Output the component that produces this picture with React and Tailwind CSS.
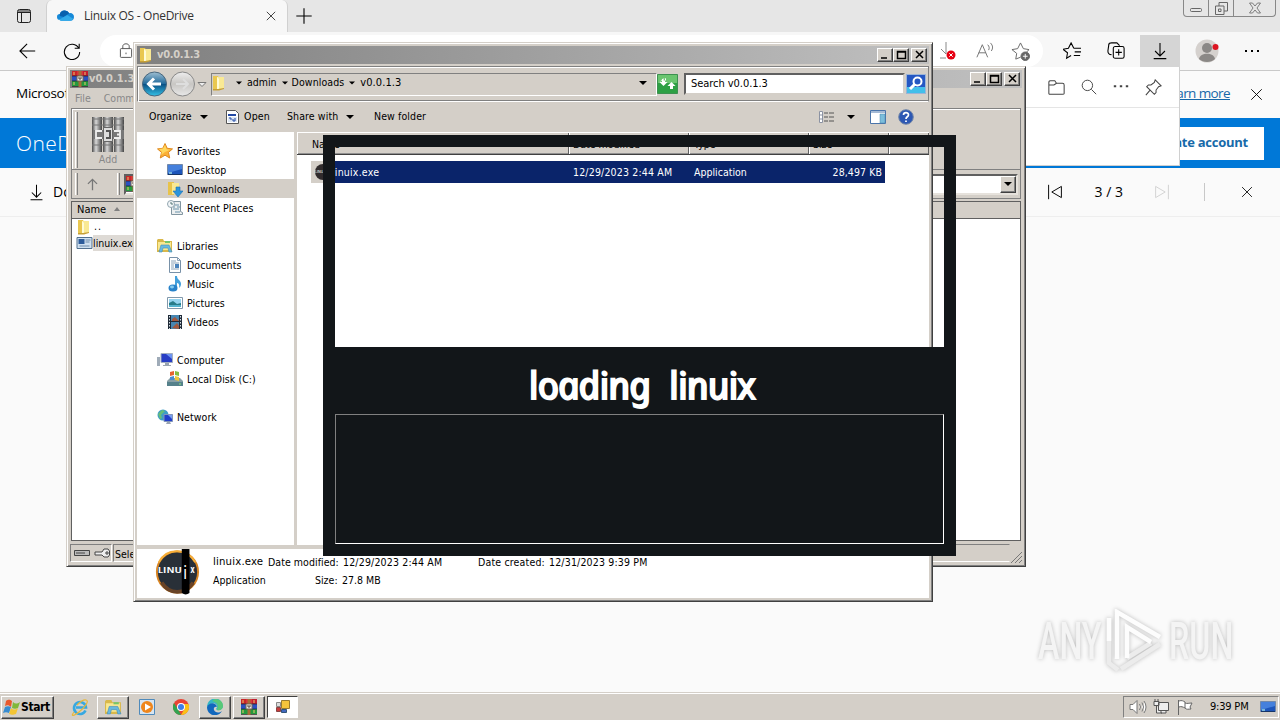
import React from "react";

const uiFont = "font-['DejaVu_Sans_Condensed','DejaVu_Sans',sans-serif] [font-stretch:75%]";

const Folder = ({ className = "w-4 h-4" }) => (
  <svg viewBox="0 0 16 16" className={className}>
    <path d="M2 1h5l1 2v12H2z" fill="#e9c750" />
    <path d="M6 2h7v11l-5 2H6z" fill="#f9e994" />
    <path d="M6 2v13l2-1V4z" fill="#fffbd6" />
    <path d="M2 14h5l6-1v1l-5 1.500H2z" fill="#c69f36" />
  </svg>
);

const Books = ({ className = "w-4 h-4" }) => (
  <svg viewBox="0 0 16 16" className={className}>
    <path d="M0 0h5v5H0z" fill="#c8262a" />
    <path d="M5 0h6v5H5z" fill="#da343a" />
    <path d="M11 0h5v5h-5z" fill="#c01f31" />
    <path d="M0 5h16v5H0z" fill="#2a50c0" />
    <path d="M0 10h16v5H0z" fill="#249a3e" />
    <path d="M0 5h16M0 10h16M0 15.500h16" stroke="#222" strokeWidth=".7" />
    <path d="M6.500 0h3v16h-3z" fill="#a76d36" />
    <path d="M5 5h6v5H5z" fill="#eee" stroke="#765" />
    <path d="M7 6v2h2V6" stroke="#543" fill="none" />
    <path d="M2 1v3M13 1v3M2 11v3M13 11v3" stroke="#edc66b" />
  </svg>
);

const Library = ({ className = "w-4 h-4" }) => (
  <svg viewBox="0 0 16 16" className={className}>
    <path d="M0 2l1-1h5l1 2h8v11H0z" fill="#d9b84a" />
    <path d="M1 4h13v8H1z" fill="#f9e891" />
    <path d="M8 3h5v2H8z" fill="#76c66b" />
    <path d="M2 14l2-7h8l3 7h-3l-1-4H6l-1 4z" fill="#68b8df" stroke="#428eb9" strokeWidth=".6" />
  </svg>
);

const Monitor = ({ className = "w-4 h-4" }) => (
  <svg viewBox="0 0 16 16" className={className}>
    <path d="M.5 2.500h15v10H.5z" fill="#1d55ba" stroke="#7288a8" />
    <path d="M1 3h14v4L1 11z" fill="#4580dc" />
    <path d="M1 12h14v1H1z" fill="#163567" />
    <path d="M2 10h3v2H2z" fill="#79b7da" />
  </svg>
);

const navIcons = {
  star: (
    <svg viewBox="0 0 16 16" className="w-4 h-4">
      <path d="M8 .5l2.200 4.800 5.300.6-4 3.500 1.200 5.600L8 12.200 3.300 15l1.200-5.600-4-3.500 5.300-.6z" fill="#fbb036" stroke="#e08a22" />
      <path d="M8 2l1.600 4.200 3.700.5L8 9l-4 3 1-3-3-3 4-.5z" fill="#ffd75c" />
    </svg>
  ),
  desktop: <Monitor />,
  downloads: (
    <svg viewBox="0 0 16 16" className="w-4 h-4">
      <path d="M1 1h6v13H1z" fill="#e8c34a" />
      <path d="M5 2h7v11H5z" fill="#fae993" />
      <path d="M9 6h4v4h3l-5 6-5-6h3z" fill="#2b94dc" stroke="#1b70b4" strokeWidth=".6" />
    </svg>
  ),
  recent: (
    <svg viewBox="0 0 16 16" className="w-4 h-4">
      <path d="M4.500 1.500h9v10l2 1v2h-11z" fill="#eceff0" stroke="#8195a0" />
      <path d="M6 5h6M6 7h2m2 0h3M6 9h6M8 12h5" stroke="#6b93aa" />
      <circle cx="4" cy="4" r="3.500" fill="#f2f6f8" stroke="#91a4ae" />
      <path d="M4 2v2h2" stroke="#577" fill="none" />
    </svg>
  ),
  library: <Library />,
  doc: (
    <svg viewBox="0 0 16 16" className="w-4 h-4">
      <path d="M2.500.5h8l3 3v12h-11z" fill="#fff" stroke="#7891a8" />
      <path d="M10.500.5v3h3M4 4h5M4 6h8M4 8h3M4 10h3M4 12h8" stroke="#8ca2b8" fill="none" />
      <path d="M8 7h4v4H8z" fill="#4c83bb" />
    </svg>
  ),
  music: (
    <svg viewBox="0 0 16 16" className="w-4 h-4">
      <path d="M8 0h2c0 4 4 4 4 8 0 2-1 3-2 4 1-4-1-5-2-5v5H8z" fill="#43a0dc" />
      <ellipse cx="6" cy="12" rx="4.500" ry="3.500" fill="#2782ca" />
      <ellipse cx="5" cy="11" rx="2" ry="1.400" fill="#83cbf0" />
    </svg>
  ),
  pictures: (
    <svg viewBox="0 0 16 16" className="w-4 h-4">
      <path d="M.5 2.500h15v11H.5z" fill="#fff" stroke="#8198ab" />
      <path d="M2 4h12v8H2z" fill="#95d4ef" />
      <path d="M2 8l4-2 4 3 4-1v4H2z" fill="#287b88" />
      <path d="M2 10h12v2H2z" fill="#55b3ce" />
    </svg>
  ),
  videos: (
    <svg viewBox="0 0 16 16" className="w-4 h-4">
      <path d="M1 1h14v14H1z" fill="#202b38" />
      <path d="M4 1h8v6H4zM4 8h8v7H4z" fill="#4787b2" />
      <path d="M5 5l3-2 4 4H5zM5 14l5-5 2 3v3z" fill="#a2583e" />
      <path d="M2.500 2v13M13.500 2v13" stroke="#d8e2e8" strokeDasharray="1.500 1.500" />
    </svg>
  ),
  computer: (
    <svg viewBox="0 0 16 16" className="w-4 h-4">
      <path d="M0 5h3v9H0z" fill="#9fabb8" />
      <path d="M4 1.500h11.500v9H4z" fill="#273dc5" stroke="#a3aec0" />
      <path d="M9 2h6v5z" fill="#6d94f2" />
      <path d="M8 11h4v2h2v1H6v-1h2z" fill="#9aa5b1" />
    </svg>
  ),
  disk: (
    <svg viewBox="0 0 16 16" className="w-4 h-4">
      <path d="M1 9l2-2h10l3 3v5H0v-5z" fill="#879fa6" />
      <path d="M0 11h16v4H0z" fill="#55818b" />
      <path d="M3 1l4-1v4L3 5z" fill="#e66430" />
      <path d="M8 0l4 1v4L8 4z" fill="#83bd42" />
      <path d="M3 6l4-1v4L3 9z" fill="#4a8bd0" />
      <path d="M8 5l4 1v4L8 9z" fill="#edc73d" />
      <path d="M12 13h2" stroke="#8ee97f" />
    </svg>
  ),
  network: (
    <svg viewBox="0 0 16 16" className="w-4 h-4">
      <circle cx="6" cy="6" r="5.500" fill="#3c9dc6" />
      <path d="M1 5l4-4 3 1-4 4 1 3-2 1z" fill="#67bd79" />
      <path d="M7 5.500h8.500v7H7z" fill="#203dcb" stroke="#8295b9" />
      <path d="M11 6h4v4z" fill="#779df0" />
      <path d="M10 13h3l1 2H9z" fill="#9aa5b1" />
    </svg>
  ),
};

const navItems = [
  { icon: "star", label: "Favorites" },
  { icon: "desktop", label: "Desktop", child: true },
  { icon: "downloads", label: "Downloads", child: true, active: true },
  { icon: "recent", label: "Recent Places", child: true },
  null,
  { icon: "library", label: "Libraries" },
  { icon: "doc", label: "Documents", child: true },
  { icon: "music", label: "Music", child: true },
  { icon: "pictures", label: "Pictures", child: true },
  { icon: "videos", label: "Videos", child: true },
  null,
  { icon: "computer", label: "Computer" },
  { icon: "disk", label: "Local Disk (C:)", child: true },
  null,
  { icon: "network", label: "Network" },
];

const raised =
  "border border-t-white border-l-white border-r-[#404040] border-b-[#404040] shadow-[inset_-1px_-1px_0_#808080]";
const windowFrame =
  "bg-[#d4cfc8] border border-t-[#d4cfc8] border-l-[#d4cfc8] border-r-[#404040] border-b-[#404040] shadow-[inset_1px_1px_0_#fff,inset_-1px_-1px_0_#808080]";

const WindowButtons = () => (
  <div className="flex">
    {["M3 9h6", "M3.500 2.500h8v7h-8zM3 3h9", "M4 2l7 7M11 2l-7 7"].map((d, i) => (
      <div key={d} className={`w-4 h-[14px] bg-[#d4cfc8] ${raised} ${i === 2 ? "ml-[2px]" : ""}`}>
        <svg viewBox="0 0 14 12" className="w-[14px] h-3">
          <path d={d} fill="none" stroke="#000" strokeWidth="1.500" />
        </svg>
      </div>
    ))}
  </div>
);

const Caret = ({ className = "" }) => (
  <span className={`block w-0 h-0 border-x-4 border-x-transparent border-t-4 border-t-black ${className}`} />
);

const Line = ({ children, className = "w-5 h-5", width = 1.2 }) => (
  <svg viewBox="0 0 20 20" className={className} fill="none" stroke="currentColor" strokeWidth={width}>
    {children}
  </svg>
);

const Cross = ({ className }) => (
  <Line className={className}>
    <path d="M3 3l14 14M17 3L3 17" />
  </Line>
);

const DownloadIcon = ({ className }) => (
  <Line className={className}>
    <path d="M10 1v14M4.500 10l5.500 5.500 5.500-5.500M3 18.500h14" />
  </Line>
);

const Browser = () => (
  <div className="w-full h-[692px] bg-[#fafafa] flex flex-col font-['Open_Sans',sans-serif] text-black">
    {/* Tab strip */}
    <div className="h-8 shrink-0 bg-[#e6e6e6] flex">
      <div className="w-[46px] pl-4 pt-[8px]">
        <svg viewBox="0 0 16 16" className="w-4 h-4" fill="none" stroke="#222">
          <rect x="1.500" y="1.500" width="13" height="13" rx="2" />
          <path d="M2 4.500h12M5.500 5v9M2 3h12" />
        </svg>
      </div>
      <div className="w-[242px] bg-[#f7f7f7] rounded-t-md border-x border-[#d0d0d0] flex items-center pl-[10px] pr-[10px]">
        <svg viewBox="0 0 18 12" className="w-[17px] h-3">
          <path d="M3 10a3 3 0 010-6 5.500 5.500 0 0110-1c3-.5 5 1.500 5 4 0 3-2 4-4 4H4z" fill="#1689d8" />
          <path d="M3 4a5.500 5.500 0 0110-1l-6 4-4-1z" fill="#0860ae" />
          <path d="M2 10l9-5 6 4c-.5 2-2 2-4 2H4z" fill="#32aaea" />
        </svg>
        <span className="ml-[10px] text-[12px] tracking-[-0.28px] text-[#333]">Linuix OS - OneDrive</span>
        <Cross className="w-[12px] h-[12px] ml-auto" />
      </div>
      <Line className="w-[22px] h-[22px] ml-[5px] mt-[5px]" width={1}><path d="M10 3v14M3 10h14" /></Line>
      <div className="ml-auto mr-[4px] w-[93px] h-[17px] border border-t-0 border-[#888] rounded-b flex text-[#666]">
        <div className="w-[25px] border-r border-[#888] flex justify-center items-center">
          <svg viewBox="0 0 12 12" className="w-3 h-3" fill="none" stroke="currentColor"><rect x=".5" y="6.500" width="11" height="3" rx="1" /></svg>
        </div>
        <div className="w-[25px] border-r border-[#888] flex justify-center items-center">
          <svg viewBox="0 0 13 13" className="w-[13px] h-[13px]" fill="none" stroke="currentColor"><path d="M4 4V.5h8.500V9H9M.5 4H9v8.500H.5zM3.500 7H6v2.500H3.500z" /></svg>
        </div>
        <div className="flex-1 flex justify-center items-center">
          <svg viewBox="0 0 12 12" className="w-3 h-3" fill="none" stroke="currentColor" strokeWidth=".8"><path d="M.5 1h3L6 4l2.500-3h3L8 6l3.500 5h-3L6 8l-2.500 3h-3L4 6z" /></svg>
        </div>
      </div>
    </div>
    {/* Navigation bar */}
    <div className="h-[39px] shrink-0 bg-[#f7f7f7] border-b border-[#c9c9c9] flex items-center">
      <Line className="w-[18px] h-[18px] ml-[19px]"><path d="M18 10H1M9 2l-8 8 8 8" /></Line>
      <Line className="w-[18px] h-[18px] ml-[26px]"><path d="M18 2v5h-5M17.500 7A8.500 8.500 0 1018.500 11" /></Line>
      <div className="w-[943px] h-8 ml-[19px] rounded-full bg-white flex items-center px-[18px] text-[#555]">
        <Line className="w-4 h-4"><rect x="3" y="7" width="14" height="11" rx="1" /><path d="M6 7V4c0-4 8-4 8 0v3M10 12v2" /></Line>
        <div className="ml-auto flex items-center">
          <svg viewBox="0 0 20 20" className="w-5 h-5 ml-[2px]">
            <path d="M9 1v12M4 8l5 5M3 17h6" stroke="#888" fill="none" />
            <circle cx="14" cy="14" r="4.500" fill="#e60012" /><path d="M12.300 12.300l3.400 3.400m0-3.400l-3.400 3.400" stroke="#fff" />
          </svg>
          <Line className="w-[18px] h-[18px] ml-[19px] text-[#777]" width={1.1}><path d="M1 17L7 3l6 14M3 12h8M13 3c2 2 2 4 1 6M16 1c3 3 3 6 1 9" /></Line>
          <svg viewBox="0 0 20 20" className="w-[19px] h-[19px] ml-[17px] -mr-[5px]" fill="none" stroke="#666">
            <path d="M10 16l-5 2 1-6-5-4 6-1 3-6 3 6 6 1-3 3" /><circle cx="15" cy="15" r="4.500" fill="#666" /><path d="M15 12.500v5M12.500 15h5" stroke="#fff" />
          </svg>
        </div>
      </div>
      <Line className="w-[18px] h-[18px] ml-[20px]"><path d="M12 7L9 1 6 7 0 8l5 4-1 6 5-3M12 7h8M13 11h7M12 15h7" /></Line>
      <Line className="w-[18px] h-[18px] ml-[26px]"><path d="M5 14c-3 0-4-2-4-4L2 3c0-2 1-2 3-2h6l3 3" /><rect x="7" y="5" width="12" height="13" rx="2" /><path d="M13 8v7M9.500 11.500h7" /></Line>
      <div className="w-10 h-8 ml-[15px] bg-[#d5d5d5] flex items-center justify-center"><DownloadIcon className="w-[18px] h-[18px]" /></div>
      <svg viewBox="0 0 24 24" className="w-6 h-6 ml-[15px]">
        <circle cx="12" cy="12" r="11.500" fill="#d5d1ce" /><circle cx="12" cy="9" r="5" fill="#8b8886" /><path d="M4 20c1-7 15-7 16 0-4 4-12 4-16 0z" fill="#8b8886" /><circle cx="20.500" cy="8" r="3" fill="#dc1420" />
      </svg>
      <div className="ml-[26px] flex gap-[4px]">
        <i className="w-[2px] h-[2px] bg-black" /><i className="w-[2px] h-[2px] bg-black" /><i className="w-[2px] h-[2px] bg-black" />
      </div>
    </div>
    {/* Notice strip */}
    <div className="h-[47px] shrink-0 flex items-center pl-4 pr-[16px] text-[13.5px]">
      <span className="tracking-[-0.25px] pb-[2px]">Microsoft</span>
      <span className="ml-auto mr-[19px] pb-[2px] tracking-[-0.6px] text-[#1767a8] underline">Learn more</span>
      <Cross className="w-[15px] h-[15px]" />
    </div>
    <div className="h-[50px] shrink-0 bg-[#0078d7] flex items-center pl-4 pr-4 text-white">
      <span className="text-[21px] font-light tracking-[0.4px] pt-[2px] w-[52px] whitespace-nowrap overflow-hidden">OneDrive</span>
      <div className="ml-auto bg-white h-[33px] flex items-center px-4 text-[#176aa9] text-[13px] font-bold tracking-[-0.25px]">Create account</div>
    </div>
    <div className="h-[49px] shrink-0 border-b border-[#eeeeee] flex items-center pl-[28px] pr-[26px] text-[14px]">
      <DownloadIcon className="w-[17px] h-[17px]" />
      <span className="ml-[8px] pb-px">Download</span>
      <Line className="w-4 h-4 ml-auto"><path d="M2 1v18M18 3v14L6 10z" /></Line>
      <span className="ml-[32px] pb-px text-[14px]">3 / 3</span>
      <Line className="w-4 h-4 ml-[31px] text-[#d2d2d2]"><path d="M18 1v18M2 3v14l12-7z" /></Line>
      <span className="h-[18px] w-px bg-[#c8c8c8] ml-[34px] mr-[35px]" />
      <Cross className="w-[14px] h-[14px]" />
    </div>
  </div>
);

const DownloadsFlyout = () => (
  <div className="absolute left-[1000px] top-[67px] w-[180px] h-[99px] bg-white border-r border-b border-[#d0d0d0] text-[#444]">
    <div className="h-[41px] border-b border-[#e5e5e5] flex items-center justify-end pr-[17px] gap-[16px]">
      <Line className="w-[17px] h-[17px]"><path d="M1 4c0-2 1-2 2-2h5l2 3h7c1 0 2 1 2 2v10c0 1-1 1-2 1H3c-1 0-2 0-2-1zM1 7h6l3-2" /></Line>
      <Line className="w-4 h-4"><circle cx="8" cy="8" r="6.500" /><path d="M13 13l6 6" /></Line>
      <Line className="w-4 h-4"><path d="M1 9h3M8.500 9h3M16 9h3" strokeWidth="2.400" /></Line>
      <Line className="w-[17px] h-[17px]"><path d="M12 1l7 7-3 1-3 4 0 3-2 2-9-9 2-2 3 0 4-3zM6 13l-5 6" /></Line>
    </div>
  </div>
);

const WinRar = () => (
  <div className={`absolute left-[66px] top-[66px] w-[960px] h-[501px] p-[3px] flex flex-col text-[10.5px] ${uiFont} ${windowFrame}`}>
    <div className="h-[18px] shrink-0 bg-linear-to-r from-[#808080] to-[#c0c0c0] flex items-center pl-[2px] pr-[2px]">
      <Books />
      <span className="ml-px mr-auto font-bold text-[#d4cfc8] text-[11px]">v0.0.1.3</span>
      <WindowButtons />
    </div>
    <div className="h-[20px] shrink-0 flex items-center pt-[2px] pl-[5px] gap-[13px] text-[#888]">
      <span>File</span><span>Commands</span>
    </div>
    <div className="h-[62px] shrink-0 border border-[#808080] shadow-[inset_1px_1px_0_#fff] mx-[1px] flex pl-[3px] pt-[3px]">
      <i className="w-[3px] h-[56px] border-l border-white border-r border-r-[#808080]" />
      <div className="ml-[11px] mt-[4px] w-[38px] text-center text-[#888]">
        <svg viewBox="0 0 34 36" className="w-[34px] h-9 ml-[2px]">
          <defs>
            <linearGradient id="spine" x1="0" x2="1"><stop offset="0" stopColor="#4a4a4a" /><stop offset=".4" stopColor="#d8d8d8" /><stop offset="1" stopColor="#444" /></linearGradient>
          </defs>
          <path d="M1 1h10v35H1z" fill="url(#spine)" />
          <path d="M12 1h10v35H12z" fill="url(#spine)" />
          <path d="M23 1h10v35H23z" fill="url(#spine)" />
          <path d="M1 3h32M1 9h32M1 29h32" stroke="#777" />
          <path d="M2 14h31v9H2z" fill="#777" />
          <path d="M11 15H5v7h6M23 15h6v7h-6M26 18.500h3" fill="none" stroke="#eee" strokeWidth="1.800" />
          <path d="M12.500 11.500h9v14h-9z" fill="#ddd" stroke="#666" />
          <path d="M15 15h4v7h-4" stroke="#555" fill="none" strokeWidth="2" />
        </svg>
        <div className="leading-[13px] mt-px">Add</div>
      </div>
    </div>
    <div className="h-[29px] shrink-0 border-x border-b border-[#808080] mx-[1px] flex items-center pl-[3px] pr-[2px]">
      <i className="w-[3px] h-[22px] border-l border-white border-r border-r-[#808080]" />
      <Line className="w-[13px] h-[13px] ml-[8px] text-[#777]" width={2}><path d="M10 19V2M3 9l7-7 7 7" /></Line>
      <i className="w-[3px] h-[22px] ml-[18px] border-l border-white border-r border-r-[#808080]" />
      <div className="ml-[4px] flex-1 h-[21px] bg-white border-2 border-t-[#606060] border-l-[#606060] border-r-[#e6e2dc] border-b-[#e6e2dc] flex items-center justify-between">
        <Books />
        <div className={`w-4 h-[17px] bg-[#d4cfc8] flex items-center justify-center ${raised}`}><Caret /></div>
      </div>
    </div>
    <div className="mt-[2px] flex-1 mx-[1px] border border-[#606060] bg-white overflow-hidden">
      <div className="h-[17px] bg-[#d4cfc8] border-b border-[#606060] flex items-center pl-[5px] pt-px text-[11px]">
        Name<span className="ml-[8px] -mt-[3px] w-0 h-0 border-x-[3.5px] border-x-transparent border-b-4 border-b-[#808080]" />
      </div>
      <div className="h-[16px] flex items-center pl-[4px]"><Folder /> <span className="ml-[2px] tracking-[1px]">..</span></div>
      <div className="h-[16px] flex items-center pl-[4px]">
        <svg viewBox="0 0 16 12" className="w-[17px] h-3"><path d="M.5.5h15v11H.5z" fill="#cfe0f0" stroke="#52708f" /><path d="M2 2h6v5H2z" fill="#2c5b9a" /><path d="M9 3h5M9 5h4M3 9h10" stroke="#6c89a8" /></svg>
        <span className="bg-[#dedad5] h-4 leading-4">linuix.exe</span>
      </div>
    </div>
    <div className="h-[20px] shrink-0 mt-[2px] flex items-center text-[10.5px]">
      <div className="w-[42px] h-[18px] border border-[#808080] border-r-white border-b-white flex items-center gap-[4px] pl-[3px]">
        <svg viewBox="0 0 16 8" className="w-4 h-2"><path d="M.5 1.500h15v5H.5z" fill="#bbb" stroke="#444" /><path d="M2 4h9" stroke="#444" /></svg>
        <svg viewBox="0 0 16 10" className="w-4 h-[10px]"><path d="M10 1h4l1.500 2v4L14 9h-4L8 7H1V4h7zM12 4h2v2h-2z" fill="#eee" stroke="#444" /></svg>
      </div>
      <div className="ml-px flex-1 h-[18px] border border-[#808080] border-r-transparent border-b-white pl-px leading-[18px]">Selected 1 file</div>
      <svg viewBox="0 0 12 12" className="w-3 h-3 self-end"><path d="M1 12L12 1M5 12l7-7M9 12l3-3" stroke="#777" /></svg>
    </div>
  </div>
);

const columns = [
  { label: "Name", cls: "w-[272px] pl-[15px]" },
  { label: "Date modified", cls: "w-[120px] pl-[4px]" },
  { label: "Type", cls: "w-[120px] pl-[5px]" },
  { label: "Size", cls: "w-[80px] pl-[4px]" },
  { label: "", cls: "flex-1" },
];

const Explorer = () => (
  <div className={`absolute left-[133px] top-[42px] w-[800px] h-[560px] p-[3px] flex flex-col text-[10.5px] ${uiFont} ${windowFrame}`}>
    {/* Title bar */}
    <div className="h-[18px] shrink-0 bg-linear-to-r from-[#808080] to-[#c0c0c0] flex items-center pl-px pr-[2px]">
      <Folder />
      <span className="ml-[3px] mr-auto pt-px font-bold text-[11px] text-[#d4cfc8] tracking-[-0.3px]">v0.0.1.3</span>
      <WindowButtons />
    </div>
    {/* Address bar */}
    <div className="mt-[2px] h-[36px] shrink-0 border border-[#808080] border-b-white shadow-[inset_1px_1px_0_#fff,inset_0_-1px_0_#808080] flex items-center pl-[3px] pr-px">
      <svg viewBox="0 0 66 28" className="w-[66px] h-7">
        <defs>
          <linearGradient id="back" x1="0" y1="0" x2="0" y2="1"><stop offset="0" stopColor="#9fbfd2" /><stop offset=".48" stopColor="#246c9d" /><stop offset=".5" stopColor="#084d82" /><stop offset="1" stopColor="#36c2e7" /></linearGradient>
          <linearGradient id="fwd" x1="0" y1="0" x2="0" y2="1"><stop offset="0" stopColor="#eee" /><stop offset=".5" stopColor="#c8c6c3" /><stop offset="1" stopColor="#e9e9e9" /></linearGradient>
        </defs>
        <circle cx="13.500" cy="14" r="12" fill="url(#back)" stroke="#48667d" />
        <path d="M20 14H8M13 8.500L7.500 14l5.500 5.500" fill="none" stroke="#fff" strokeWidth="3" />
        <circle cx="41.500" cy="14" r="12" fill="url(#fwd)" stroke="#888" />
        <path d="M35 14h12M42 9l5 5-5 5" fill="none" stroke="#dedede" strokeWidth="2" />
        <path d="M57 12.500h8l-4 4z" fill="#eee" stroke="#777" />
      </svg>
      <div className="ml-[4px] w-[446px] h-[23px] border border-[#808080] border-b-white border-r-white flex items-center pb-[2px]">
        <Folder className="w-4 h-4 -ml-px" />
        <Caret className="ml-[8px] scale-75" /><span className="ml-[4px]">admin</span>
        <Caret className="ml-[4px] scale-75" /><span className="ml-[3px] tracking-[0.08px]">Downloads</span>
        <Caret className="ml-[4px] scale-75" /><span className="ml-[4px] text-[11px] tracking-[0.1px]">v0.0.1.3</span>
        <Caret className="ml-auto mr-[9px]" />
      </div>
      <svg viewBox="0 0 21 20" className="w-[21px] h-5">
        <path d="M.5.5h20v19H.5z" fill="#2da044" stroke="#3d9150" /><path d="M1 1h19v8H1z" fill="#6ac56f" />
        <path d="M2.500 8L6.500 4v2.500H9V4M6.500 12l-4-4h2.500V5h3v3h2.500zM14.500 8l4 4H16v3h-3v-3h-2.500z" fill="#fff" />
      </svg>
      <div className="ml-[6px] w-[221px] h-[22px] bg-white border-2 border-t-[#606060] border-l-[#606060] border-r-[#d4cfc8] border-b-[#d4cfc8] pl-[5px] leading-[17px] text-[11px] tracking-[-0.05px]">Search v0.0.1.3</div>
      <svg viewBox="0 0 20 20" className="w-5 h-5 ml-px">
        <path d="M.5.5h19v19H.5z" fill="#2557c3" stroke="#9bb4d6" /><path d="M1 13h18v6H1z" fill="#42bfea" /><circle cx="11.500" cy="7.500" r="4" fill="none" stroke="#fff" strokeWidth="2" /><path d="M9 10l-5 5" stroke="#fff" strokeWidth="3" />
      </svg>
    </div>
    {/* Command bar */}
    <div className="h-[30px] shrink-0 flex items-center pl-[12px] pr-[15px]">
      <span className="w-[43px] tracking-[0.05px]">Organize</span><Caret className="ml-[8px]" />
      <svg viewBox="0 0 15 16" className="w-[15px] h-4 ml-[17px]"><path d="M1.500 1.500h9l3 3v10h-12z" fill="#fff" stroke="#555" /><path d="M3 5h8v2H3z" fill="#2349a5" /><path d="M3 8h9v5H3z" fill="#dce6f3" /><path d="M4 9h2v2m1 0h2v2m1-4v3" stroke="#2349a5" fill="none" /></svg>
      <span className="ml-[4px] w-[27px] tracking-[0.2px]">Open</span>
      <span className="ml-[16px] w-[52px] tracking-[0.1px] whitespace-nowrap">Share with</span><Caret className="ml-[7px]" />
      <span className="ml-[20px] tracking-[0.1px]">New folder</span>
      <svg viewBox="0 0 16 12" className="w-4 h-3 ml-auto"><path d="M.5.5h3v11h-3zM1 4h3M1 8h3" fill="#fff" stroke="#8c93a3" /><path d="M5 2h4m1 0h5M5 6h4m1 0h5M5 10h4m1 0h5" stroke="#555" /></svg>
      <Caret className="ml-[12px]" />
      <svg viewBox="0 0 16 14" className="w-4 h-[14px] ml-[15px]"><path d="M.5.5h15v13H.5z" fill="#fff" stroke="#4a74aa" /><path d="M1 2h14" stroke="#4a74aa" /><path d="M10 4h5v9h-5z" fill="#7bbddb" stroke="#4a84aa" strokeWidth=".5" /></svg>
      <svg viewBox="0 0 16 16" className="w-4 h-4 ml-[12px]"><circle cx="8" cy="8" r="7.300" fill="#2d58b3" stroke="#7387a8" /><path d="M5.500 6c0-3 5-3 5-.3C10.500 8 8 7.500 8 10M8 11.500v1.500" fill="none" stroke="#fff" strokeWidth="1.700" /></svg>
    </div>
    <div className="flex-1 min-h-0 flex">
      <div className="w-[157px] bg-white pt-[9px]">
        {navItems.map((item, i) =>
          item ? (
            <div key={item.label} className={`h-[19px] flex items-center ${item.child ? "pl-[30px]" : "pl-[20px]"} ${item.active ? "bg-[#d4cfc8]" : ""}`}>
              {navIcons[item.icon]}
              <span className="ml-[4px] pt-[2px] whitespace-nowrap tracking-[0.06px]">{item.label}</span>
            </div>
          ) : (
            <div key={i} className="h-[19px]" />
          )
        )}
      </div>
      <div className="w-[3px] bg-[#d4cfc8]" />
      <div className="flex-1 bg-white">
        <div className="h-[23px] bg-[#d4cfc8] border-t border-white border-b border-b-[#404040] flex">
          {columns.map((col) => (
            <div key={col.label} className={`${col.cls} pt-[2px] border-r border-[#606060] shadow-[inset_1px_0_0_#fff,inset_0_-1px_0_#909090] flex items-center`}>{col.label}</div>
          ))}
        </div>
        <div className="mt-[6px] h-[22px] ml-[14px] w-[574px] flex items-center bg-[#0a246a] text-white">
          <div className="w-[20px] h-full bg-[#d4cfc8] flex items-center pl-[4px]"><span className="w-4 h-4 rounded-full bg-[#302b2c] text-[4px] leading-4">LINUIX</span></div>
          <span className="ml-px w-[241px] pt-px tracking-[0.2px]">linuix.exe</span>
          <span className="w-[121px] pt-px tracking-[0.17px]">12/29/2023 2:44 AM</span>
          <span className="pt-px">Application</span>
          <span className="ml-auto mr-[3px] pt-px tracking-[0.08px]">28,497 KB</span>
        </div>
      </div>
    </div>
    {/* Details pane */}
    <div className="h-[53px] shrink-0 border-t-4 border-[#d4cfc8] bg-white flex">
      <svg viewBox="0 0 48 48" className="w-12 h-[46px] ml-[16px]">
        <circle cx="24.500" cy="24" r="21.500" fill="#293038" stroke="#d98522" strokeWidth="2" />
        <path d="M5 14C13-2 35-1 43 14" fill="none" stroke="#f6ae38" strokeWidth="2" />
        <path d="M8 35c8 13 24 13 33 0" fill="none" stroke="#694326" strokeWidth="4" />
        <path d="M29 0h8v46q-4 3-8 0z" fill="#000" />
        <text x="4" y="25" fill="#fff" fontSize="10" fontWeight="600" textLength="25" lengthAdjust="spacingAndGlyphs" fontFamily="Open Sans">LINU</text>
        <text x="30.500" y="31" fill="#fff" fontSize="19" fontFamily="Open Sans">i</text>
        <text x="38" y="25" fill="#fff" fontSize="9" fontWeight="700" fontFamily="Open Sans">X</text>
      </svg>
      <div className="ml-[12px] pt-[4px] leading-[18px] whitespace-nowrap">
        <div className="flex tracking-[0.17px]"><span className="w-[55px] text-[11.3px]">linuix.exe</span><span className="w-[75px] tracking-[0.05px]">Date modified:</span><span className="w-[135px]">12/29/2023 2:44 AM</span><span className="w-[71px]">Date created:</span><span>12/31/2023 9:39 PM</span></div>
        <div className="flex"><span className="w-[102px]">Application</span><span className="w-[27px]">Size:</span><span>27.8 MB</span></div>
      </div>
    </div>
  </div>
);

// Frame with a see-through upper half
const Splash = () => (
  <div className="absolute left-[323px] top-[135px] w-[633px] h-[421px] flex flex-col">
    <div className="h-[212px] border-12 border-b-0 border-[#121619]" />
    <div className="flex-1 bg-[#121619] px-3 pb-3 flex flex-col">
      <div className="h-[67px] pt-[9px] pl-[4px] flex justify-center items-center">
        <span className="inline-block skew-x-12 font-['Noto_Sans',sans-serif] italic text-[37.5px] text-white leading-none whitespace-nowrap tracking-[-0.8px] [word-spacing:10px] [-webkit-text-stroke:2px_#fff]">loading linuix</span>
      </div>
      <div className="flex-1 border border-t-[#808080] border-l-[#808080] border-r-white border-b-white" />
    </div>
  </div>
);

const Watermark = () => (
  <div className="absolute left-[1038px] top-[607px] w-[204px] h-[70px] flex items-center font-['Roboto',sans-serif] font-medium text-[52px] leading-none text-[#f4f4f4] [filter:drop-shadow(0_0_2px_#bbb)]">
    <div className="w-[66px]"><span className="inline-block origin-left scale-x-[0.62]">ANY</span></div>
    <svg viewBox="0 0 62 66" className="w-[62px] h-[66px]" fill="none" strokeWidth="4.500">
      <path d="M17 60l39-25M5 9v45l9 7M23 49l24-15" stroke="#ececec" />
      <path d="M13 50V3l43 25M23 49V18l24 15M5 32V9" stroke="#fdfdfd" />
    </svg>
    <div className="ml-[3px] w-[66px]"><span className="inline-block origin-left scale-x-[0.62]">RUN</span></div>
  </div>
);

const IeIcon = () => (
  <svg viewBox="0 0 18 18" className="w-[18px] h-[18px]">
    <path d="M14.500 12.500a6 6 0 11.500-3H5" fill="none" stroke="#36a8e1" strokeWidth="2.600" />
    <path d="M3 14C-1 19 3 18 8 14S19 3 15 2c-1.500-.4-5 1-9 5" fill="none" stroke="#e8b83a" strokeWidth="1.200" />
  </svg>
);

const taskButton = `w-[32px] h-[23px] flex items-center justify-center ${raised}`;

const Taskbar = () => (
  <div className={`h-[28px] bg-[#d4cfc8] border-t border-[#d4cfc8] shadow-[inset_0_1px_0_#fff] flex items-center pt-px pl-px pr-px text-[10.5px] ${uiFont}`}>
    <div className={`w-[53px] h-[23px] flex items-center ${raised}`}>
      <svg viewBox="0 0 17 16" className="w-[17px] h-4 ml-px"><path d="M3 2c3-2 4-1 6 0L8 8C6 6 4 6 2 7z" fill="#e9582c" /><path d="M10 3c2 2 4 2 7 0l-2 6c-2 1-4 1-6 0z" fill="#80b83b" /><path d="M2 8c2-1 4-1 6 0l-2 6c-2-1-4-1-6 0z" fill="#388cd0" /><path d="M8 9c2 2 4 2 7 0l-2 6c-3 1-4 1-7 0z" fill="#f4c534" /></svg>
      <span className="font-bold text-[12px] ml-px tracking-[-0.4px]">Start</span>
    </div>
    <div className="w-[43px] flex justify-center pl-[8px]"><IeIcon /></div>
    <div className={taskButton}><Library className="w-[17px] h-[17px]" /></div>
    <div className="w-[35px] flex justify-center">
      <svg viewBox="0 0 16 16" className="w-4 h-4"><path d="M.5.5h15v15H.5z" fill="#d7e5f1" stroke="#4f8abb" /><circle cx="8" cy="8" r="6" fill="#ef861c" /><path d="M6 4.500v7l6-3.500z" fill="#fff" /></svg>
    </div>
    <div className="w-[33px] flex justify-center">
      <svg viewBox="0 0 16 16" className="w-4 h-4"><circle cx="8" cy="8" r="8" fill="#e94335" /><path d="M1 4l5 8 2 4A8 8 0 011 4z" fill="#31a350" /><path d="M8 5h7.500A8 8 0 018 16l4-7z" fill="#fbc116" /><circle cx="8" cy="8" r="4" fill="#fff" /><circle cx="8" cy="8" r="3" fill="#3e7ee8" /></svg>
    </div>
    <div className={`${taskButton} ml-[2px]`}>
      <svg viewBox="0 0 16 16" className="w-4 h-4">
        <path d="M0 8a8 8 0 0116-1c0 3-3 5-6 4-2-1 0-2 0-3 0-5-6-5-10 0z" fill="#35b6c4" />
        <path d="M8 0c5 0 8 3 8 7 0 3-3 5-6 4 2-5 0-8-5-9z" fill="#58c878" />
        <path d="M0 8c2-5 9-5 10 0-1-1-4 0-3 3 1 2 4 4 8 1-4 7-15 5-15-4z" fill="#1268bd" />
      </svg>
    </div>
    <div className={`${taskButton} ml-[2px]`}><Books /></div>
    <div className="w-[31px] h-[22px] ml-[2px] bg-white border border-t-[#404040] border-l-[#404040] border-white flex items-center justify-center">
      <svg viewBox="0 0 16 16" className="w-4 h-4"><path d="M6.500 1.500h8v8h-8z" fill="#f4c43c" stroke="#987b30" /><path d="M1.500 3.500h4v4h-4z" fill="#ddd" stroke="#888" /><path d="M1.500 8.500h4v4h-4z" fill="#c83b3b" stroke="#844" /><path d="M6.500 10.500h5v3h-5z" fill="#4268c0" stroke="#357" /></svg>
    </div>
    <div className="ml-auto w-[156px] h-[22px] border border-[#808080] border-r-white border-b-white flex items-center pl-[5px] pr-[2px]">
      <svg viewBox="0 0 18 16" className="w-[18px] h-4" fill="#fff" stroke="#777"><path d="M1 5.500h3l4-4v13l-4-4H1zM10.500 5q2 3 0 6M13 3.500q3 4.500 0 9M15 2q4 6 0 12" /></svg>
      <svg viewBox="0 0 16 16" className="w-4 h-4 ml-[6px]" fill="#eee" stroke="#555"><path d="M5.500 3.500h10v8h-10zM8 12v2h5v-2M1 2.500h5v4H1zM2 0v3M5 0v3M3.500 7v7H9" /></svg>
      <svg viewBox="0 0 16 16" className="w-4 h-4 ml-[8px]" fill="#fff" stroke="#666"><path d="M1.500 16V1M2 2c3-1 4 0 6 1v6C6 8 4 7 2 8M8 4c2 1 4 0 7 0l-2 4 1 2c-3 0-4 1-6-1" /></svg>
      <span className="ml-[17px] pt-px whitespace-nowrap text-[11px] tracking-[-0.2px]">9:39 PM</span>
      <Monitor className="w-4 h-4 ml-auto" />
    </div>
  </div>
);

const App = () => {
  return (
    <div className="relative w-[1280px] h-[720px] overflow-hidden text-black">
      <Browser />
      <DownloadsFlyout />
      <Watermark />
      <WinRar />
      <Explorer />
      <Splash />
      <Taskbar />
    </div>
  );
};

export default App;
